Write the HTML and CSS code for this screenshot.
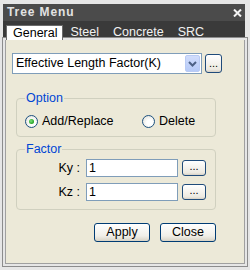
FILE: index.html
```html
<!DOCTYPE html>
<html>
<head>
<meta charset="utf-8">
<link rel="stylesheet" href="styles.css">
</head>
<body>
<div class="window">
  <div class="titlebar">
    <span class="title">Tree Menu</span>
    <svg class="close" width="9" height="8" viewBox="0 0 9 8"><path d="M1 0.5 L8 7.5 M8 0.5 L1 7.5" stroke="#f4f4f4" stroke-width="2"/></svg>
  </div>
  <div class="tabs">
    <div class="tab active">General</div>
    <div class="tab">Steel</div>
    <div class="tab">Concrete</div>
    <div class="tab">SRC</div>
  </div>
  <div class="content">
    <div class="select-row">
      <div class="select">
        <span class="select-text">Effective Length Factor(K)</span>
        <div class="arrow"><svg width="9" height="6" viewBox="0 0 9 6"><path d="M1 1 L4.5 4.5 L8 1" fill="none" stroke="#4d6185" stroke-width="2"/></svg></div>
      </div>
      <div class="dots big">...</div>
    </div>
    <fieldset class="group option">
      <legend>Option</legend>
      <div class="radios">
        <label class="radio first"><span class="circle checked"></span>Add/Replace</label>
        <label class="radio"><span class="circle"></span>Delete</label>
      </div>
    </fieldset>
    <fieldset class="group factor">
      <legend>Factor</legend>
      <div class="frow"><span class="lbl">Ky :</span><div class="input">1</div><div class="dots small">...</div></div>
      <div class="frow"><span class="lbl">Kz :</span><div class="input">1</div><div class="dots small">...</div></div>
    </fieldset>
    <div class="actions">
      <div class="btn">Apply</div>
      <div class="btn">Close</div>
    </div>
  </div>
</div>
</body>
</html>
```
FILE: styles.css
```css
html, body {
  margin: 0;
  padding: 0;
}
body {
  background: #e6e6e6;
  font-family: "Liberation Sans", Arial, sans-serif;
  font-size: 12.5px;
  color: #000;
  width: 250px;
  height: 270px;
  overflow: hidden;
}
.window {
  margin: 4px 0 0 3px;
  width: 242px;
}
.titlebar {
  height: 17px;
  background: #4b4b4b;
  display: flex;
  align-items: center;
  justify-content: space-between;
  padding: 0 3px 0 4px;
}
.title {
  color: #e2e2e2;
  font-weight: bold;
  font-size: 12px;
  letter-spacing: 0.9px;
  line-height: 17px;
}
.close {
  display: block;
  margin-top: 1px;
}
.tabs {
  height: 19px;
  background: #3a3a3a;
  display: flex;
  align-items: flex-end;
  padding-left: 3px;
}
.tab {
  color: #f2f2f2;
  height: 15px;
  line-height: 15px;
  padding: 0 7px;
  font-size: 12.5px;
}
.tab.active {
  background: #fff;
  color: #000;
  border: 1px solid #6a6a6a;
  border-bottom: none;
  height: 14px;
  line-height: 15px;
  padding: 0 5px 0 6px;
  margin-right: 0;
}
.content {
  margin-left: 2px;
  height: 223px;
  background: #ece9d8;
  border: 1px solid #a0a0a0;
  border-top: none;
  box-shadow: 0 0 0 2px #e6e6e6, 0 0 0 3px #8c8c8c;
  display: flex;
  flex-direction: column;
  align-items: flex-start;
}
.select-row {
  display: flex;
  align-items: center;
  margin: 13px 0 0 6px;
}
.select {
  box-sizing: border-box;
  width: 190px;
  height: 21px;
  background: #fff;
  border: 1px solid #7f9db9;
  display: flex;
  align-items: center;
  justify-content: space-between;
  padding: 0 1px 0 3px;
}
.select-text {
  line-height: 17px;
}
.arrow {
  box-sizing: border-box;
  width: 15px;
  height: 17px;
  background: linear-gradient(#d1ddfc, #b6caf7);
  border: 1px solid #b9cbf4;
  border-radius: 2px;
  display: flex;
  align-items: center;
  justify-content: center;
}
.arrow svg {
  display: block;
}
.dots {
  box-sizing: border-box;
  border: 1px solid #1f4b7a;
  border-radius: 3px;
  background: linear-gradient(#ffffff, #ece9e0 85%, #d6d0c5);
  display: flex;
  align-items: flex-end;
  justify-content: center;
  font-size: 11px;
  line-height: 11px;
  letter-spacing: 0;
}
.dots.big {
  width: 17px;
  height: 19px;
  margin-left: 3px;
  padding-bottom: 3px;
}
.dots.small {
  width: 24px;
  height: 16px;
  margin-left: 4px;
  padding-bottom: 3px;
}
.group {
  box-sizing: border-box;
  width: 200px;
  margin: 0 0 0 10px;
  border: 1px solid #d0d0bf;
  border-radius: 4px;
  padding: 0 8px;
}
.group legend {
  color: #0046d5;
  padding: 0 1px;
  line-height: 14px;
}
.option {
  margin-top: 17px;
  padding-top: 9px;
  padding-bottom: 8px;
}
.radios {
  display: flex;
  align-items: center;
  height: 14px;
}
.radio {
  display: flex;
  align-items: center;
  gap: 4px;
}
.radio.first {
  width: 117px;
}
.circle {
  box-sizing: border-box;
  width: 13px;
  height: 13px;
  border-radius: 50%;
  border: 1px solid #1c5180;
  background: radial-gradient(circle at 60% 60%, #ffffff 30%, #dcdcd2 100%);
  display: flex;
  align-items: center;
  justify-content: center;
}
.circle.checked::after {
  content: "";
  width: 5px;
  height: 5px;
  border-radius: 50%;
  background: radial-gradient(circle at 40% 40%, #7ee07e, #21a121 70%);
}
.factor {
  margin-top: 5px;
  padding-top: 3px;
  padding-bottom: 8px;
  display: flex;
  flex-direction: column;
  gap: 6px;
}
.frow {
  display: flex;
  align-items: center;
}
.lbl {
  width: 55px;
  text-align: right;
  margin-right: 6px;
}
.input {
  box-sizing: border-box;
  width: 92px;
  height: 18px;
  background: #fff;
  border: 1px solid #7f9db9;
  padding-left: 2px;
  line-height: 16px;
}
.actions {
  align-self: stretch;
  display: flex;
  justify-content: flex-end;
  gap: 10px;
  margin-top: 13px;
  padding-right: 28px;
}
.btn {
  box-sizing: border-box;
  width: 56px;
  height: 19px;
  border: 1px solid #003c74;
  border-radius: 3px;
  background: linear-gradient(#ffffff, #f0efe8 70%, #d8d3c5);
  text-align: center;
  line-height: 17px;
}
```
